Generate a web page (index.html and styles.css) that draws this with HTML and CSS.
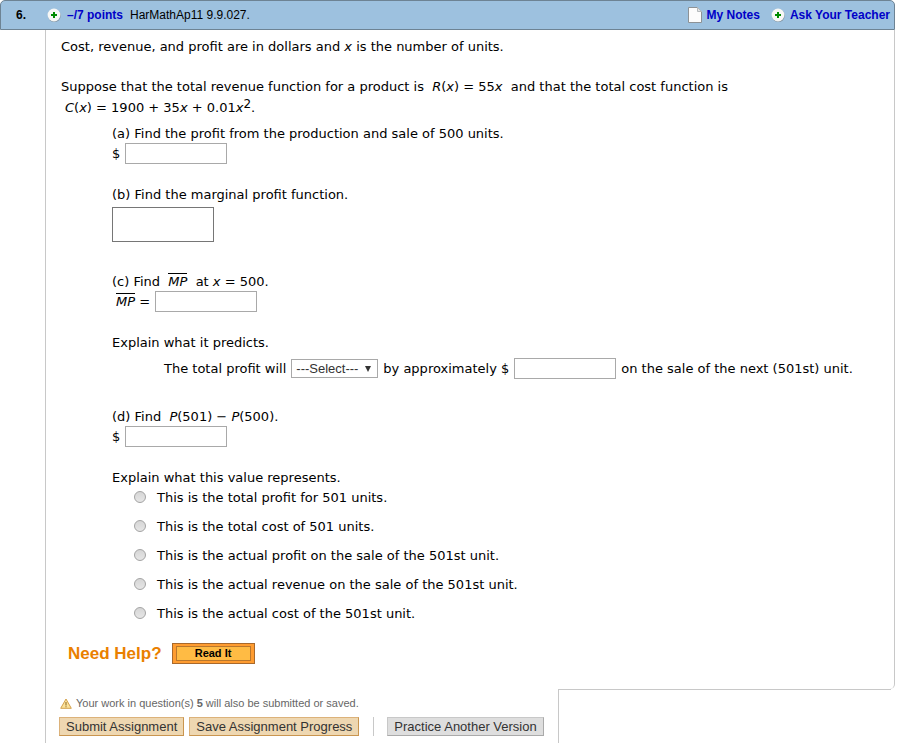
FILE: index.html
```
<!DOCTYPE html>
<html lang="en">
<head>
  <meta charset="UTF-8">
  <meta name="viewport" content="width=device-width, initial-scale=1.0">
  <title>Assignment - Question 6</title>
  <link rel="stylesheet" href="styles.css">
</head>
<body>
  <header class="question-header">
    <span class="number">6.</span>
    <svg class="plus" width="14" height="14" viewBox="0 0 14 14" aria-hidden="true">
      <circle cx="7.4" cy="7.6" r="6.4" fill="#8497a6"/>
      <circle cx="7" cy="7" r="6.4" fill="#f7f7f5"/>
      <path d="M6 4h2v2h2v2H8v2H6V8H4V6h2z" fill="#008a00"/>
    </svg>
    <a class="points" href="#points">–/7 points</a>
    <span class="source">HarMathAp11 9.9.027.</span>
    <a class="notes" href="#notes">
      <svg width="14" height="16" viewBox="0 0 14 16" aria-hidden="true">
        <path d="M.5.5h9l4 4v11H.5z" fill="#fcfcfc" stroke="#8d9296"/>
        <path d="M9.5.5v4h4z" fill="#e2e4e6" stroke="#b5babd"/>
      </svg>
      My Notes</a>
    <a class="ask" href="#ask">
      <svg width="14" height="14" viewBox="0 0 14 14" aria-hidden="true">
        <circle cx="7.4" cy="7.6" r="6.4" fill="#8497a6"/>
        <circle cx="7" cy="7" r="6.4" fill="#f7f7f5"/>
        <path d="M6 4h2v2h2v2H8v2H6V8H4V6h2z" fill="#008a00"/>
      </svg>
      Ask Your Teacher</a>
  </header>

  <main class="question">
    <p class="intro">Cost, revenue, and profit are in dollars and <i>x</i> is the number of units.</p>
    <p>Suppose that the total revenue function for a product is &nbsp;<i>R</i>(<i>x</i>) = 55<i>x</i>&nbsp; and that the total cost function is</p>
    <p class="formula"><i>C</i>(<i>x</i>) = 1900 + 35<i>x</i> + 0.01<i>x</i><sup>2</sup>.</p>

    <div class="parts">
      <section class="part">
        <label for="profit">(a) Find the profit from the production and sale of 500 units.</label>
        <div class="answer">$ <input type="text" id="profit"></div>
      </section>

      <section class="part part-b">
        <label for="marginal">(b) Find the marginal profit function.</label>
        <textarea id="marginal"></textarea>
      </section>

      <section class="part">
        <label for="mp">(c) Find &nbsp;<i class="bar">MP</i>&nbsp; at <i>x</i> = 500.</label>
        <div class="answer mp"><span><i class="bar">MP</i> =</span> <input type="text" id="mp"></div>
      </section>

      <section class="part predict">
        <p>Explain what it predicts.</p>
        <div class="answer sentence">
          <label for="change">The total profit will</label>
          <select id="change">
            <option>---Select---</option>
            <option>increase</option>
            <option>decrease</option>
          </select>
          <label for="amount">by approximately $</label>
          <input type="text" id="amount">
          <span>on the sale of the next (501st) unit.</span>
        </div>
      </section>

      <section class="part">
        <label for="difference">(d) Find &nbsp;<i>P</i>(501) − <i>P</i>(500).</label>
        <div class="answer">$ <input type="text" id="difference"></div>
      </section>

      <fieldset class="choices">
        <legend>Explain what this value represents.</legend>
        <label><input type="radio" name="meaning"> This is the total profit for 501 units.</label>
        <label><input type="radio" name="meaning"> This is the total cost of 501 units.</label>
        <label><input type="radio" name="meaning"> This is the actual profit on the sale of the 501st unit.</label>
        <label><input type="radio" name="meaning"> This is the actual revenue on the sale of the 501st unit.</label>
        <label><input type="radio" name="meaning"> This is the actual cost of the 501st unit.</label>
      </fieldset>
    </div>

    <div class="help">
      <strong>Need Help?</strong>
      <button type="button" class="read-it"><span>Read It</span></button>
    </div>
  </main>

  <footer class="submit">
    <div class="submit-box">
      <p class="warning">
        <svg width="12" height="11" viewBox="0 0 12 11" aria-hidden="true">
          <path d="M6 1l5.3 9.3H.7z" fill="#fbe29a" stroke="#d3a04c" stroke-linejoin="round"/>
          <path d="M5.5 4h1v3.5h-1zM5.5 8.3h1v1h-1z" fill="#8a6420"/>
        </svg>
        <span>Your work in question(s) <b>5</b> will also be submitted or saved.</span>
      </p>
      <div class="buttons">
        <button type="button">Submit Assignment</button>
        <button type="button">Save Assignment Progress</button>
        <span class="divider"></span>
        <button type="button" class="practice">Practice Another Version</button>
      </div>
    </div>
    <div class="submit-rest"></div>
  </footer>
</body>
</html>
```

FILE: styles.css
```
* {
  box-sizing: border-box;
}
body {
  margin: 0;
  padding-right: 3px;
  font-family: Verdana, "DejaVu Sans", sans-serif;
  font-size: 13px;
  line-height: 20px;
  color: #000;
  background: #fff;
}
p {
  margin: 0;
}
.question-header {
  display: flex;
  align-items: center;
  height: 30px;
  padding: 0 4px 0 15px;
  font-family: Arial, "Liberation Sans", sans-serif;
  font-size: 12px;
  background: #9dc1df;
  border: 1px solid #6d8394;
  border-radius: 5px 5px 0 0;
}
.question-header a {
  display: flex;
  align-items: center;
  gap: 5px;
  font-weight: bold;
  color: #0000c8;
  text-decoration: none;
}
.number {
  width: 31px;
  font-weight: bold;
}
.question-header .points {
  margin: 0 7px 0 6px;
}
.question-header .notes {
  margin-left: auto;
  margin-right: 11px;
}
.question {
  margin-left: 45px;
  padding: 7px 15px 25px;
  border-left: 1px solid #c8c8c8;
  border-right: 1px solid #c8c8c8;
  border-bottom-right-radius: 5px;
}
.intro {
  margin-bottom: 20px;
}
.formula {
  padding: 1px 0 0 4px;
}
sup {
  font-size: 12px;
  line-height: 0;
  vertical-align: 4px;
}
.parts {
  margin: 6px 0 9px 51px;
}
.part {
  margin-bottom: 21px;
}
.part > label {
  display: block;
}
.answer {
  display: flex;
  align-items: center;
  gap: 5px;
  margin-top: -1px;
}
input[type="text"] {
  width: 102px;
  height: 21px;
  border: 1px solid #a9a9a9;
}
textarea {
  display: block;
  width: 102px;
  height: 35px;
  margin-top: 2px;
  border: 1px solid #767676;
  resize: none;
}
.part-b {
  margin-bottom: 30px;
}
.bar {
  border-top: 1px solid #000;
}
.mp {
  padding-left: 4px;
}
.predict {
  margin-bottom: 28px;
}
.sentence {
  margin: 5px 0 0 52px;
}
select {
  width: 87px;
  height: 19px;
  padding: 0 0 0 4px;
  appearance: none;
  font: 13px/17px Arial, "Liberation Sans", sans-serif;
  color: #333;
  border: 1px solid #a9a9a9;
  background: #fff url("data:image/svg+xml,%3Csvg xmlns='http://www.w3.org/2000/svg' width='6' height='6'%3E%3Cpath d='M0 0h6L3 6z' fill='%23333'/%3E%3C/svg%3E") no-repeat right 6px center;
}
.choices {
  margin: 0;
  padding: 0;
  border: none;
}
.choices legend {
  padding: 0;
}
.choices label {
  display: flex;
  align-items: center;
  gap: 11px;
  margin: 0 0 9px 22px;
}
input[type="radio"] {
  appearance: none;
  width: 12px;
  height: 12px;
  margin: 0 0 2px;
  border: 1px solid #a3a3a3;
  border-radius: 50%;
  background: linear-gradient(#d6d6d6, #e6e6e6);
}
.help {
  display: flex;
  align-items: center;
  gap: 10px;
  margin: 10px 0 0 7px;
  font-family: Arial, "Liberation Sans", sans-serif;
}
.help strong {
  font-size: 17px;
  color: #ea8000;
}
.read-it {
  width: 83px;
  height: 21px;
  padding: 2px 3px;
  background: #ff9c30;
  border: 1px solid #a9692b;
}
.read-it span {
  display: block;
  font: bold 11px/13px Arial, "Liberation Sans", sans-serif;
  color: #000;
  background: #ffbb44;
  border: 1px solid #b9772c;
}
/* the bottom line of the question starts where the submit box ends */
.submit {
  display: flex;
  margin-left: 45px;
  font-family: Arial, "Liberation Sans", sans-serif;
}
.submit-box {
  flex: none;
  width: 513px;
  padding: 5px 0 7px 13px;
  border-left: 1px solid #c8c8c8;
}
.submit-rest {
  flex: 1;
  border-left: 1px solid #c8c8c8;
  border-top: 1px solid #c8c8c8;
  margin-right: 4px;
}
.warning {
  display: flex;
  align-items: center;
  gap: 4px;
  padding-left: 1px;
  font-size: 11px;
  line-height: 18px;
  color: #666;
}
.buttons {
  display: flex;
  align-items: center;
  gap: 5px;
  margin-top: 5px;
}
.buttons button {
  height: 19px;
  padding: 0 6px;
  font: 13px/17px Arial, "Liberation Sans", sans-serif;
  color: #333;
  background: #eed7b1;
  border: 1px solid #dcb27a;
  border-bottom-color: #c9954f;
  border-right-color: #c9954f;
}
.buttons .practice {
  background: #dedede;
  border-color: #c8c8c8 #aaa #aaa #c8c8c8;
}
.divider {
  width: 1px;
  height: 19px;
  margin: 0 8px 0 9px;
  background: #c8c8c8;
}
```
